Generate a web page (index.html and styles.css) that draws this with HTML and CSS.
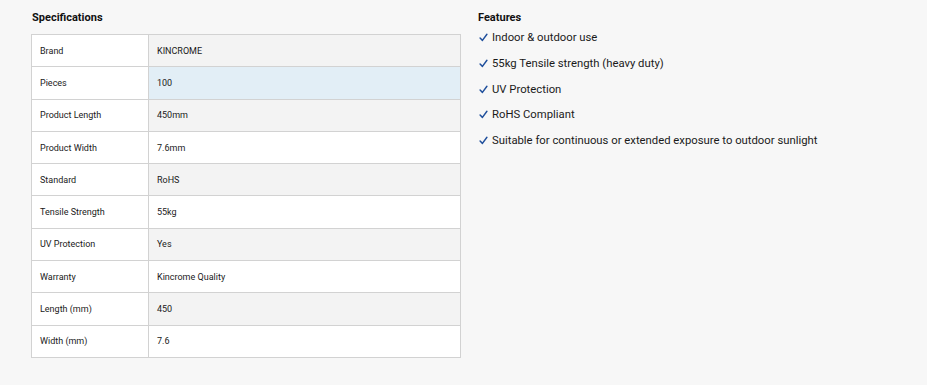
FILE: index.html
```html
<!DOCTYPE html>
<html lang="en">
<head>
<meta charset="utf-8">
<title>Specifications</title>
<link rel="stylesheet" href="styles.css">
</head>
<body>
<div class="page">
  <section class="specs">
    <h2 class="heading">Specifications</h2>
    <table class="spec-table">
      <tbody>
        <tr><td class="label">Brand</td><td class="value">KINCROME</td></tr>
        <tr class="hover"><td class="label">Pieces</td><td class="value">100</td></tr>
        <tr><td class="label">Product Length</td><td class="value">450mm</td></tr>
        <tr><td class="label">Product Width</td><td class="value">7.6mm</td></tr>
        <tr><td class="label">Standard</td><td class="value">RoHS</td></tr>
        <tr><td class="label">Tensile Strength</td><td class="value">55kg</td></tr>
        <tr><td class="label">UV Protection</td><td class="value">Yes</td></tr>
        <tr><td class="label">Warranty</td><td class="value">Kincrome Quality</td></tr>
        <tr><td class="label">Length (mm)</td><td class="value">450</td></tr>
        <tr><td class="label">Width (mm)</td><td class="value">7.6</td></tr>
      </tbody>
    </table>
  </section>
  <section class="features">
    <h2 class="heading">Features</h2>
    <ul class="feature-list">
      <li><svg class="tick" viewBox="0 0 10 10" aria-hidden="true"><path d="M1.2 5.6 L3.8 8.2 L8.8 1.4"/></svg>Indoor &amp; outdoor use</li>
      <li><svg class="tick" viewBox="0 0 10 10" aria-hidden="true"><path d="M1.2 5.6 L3.8 8.2 L8.8 1.4"/></svg>55kg Tensile strength (heavy duty)</li>
      <li><svg class="tick" viewBox="0 0 10 10" aria-hidden="true"><path d="M1.2 5.6 L3.8 8.2 L8.8 1.4"/></svg>UV Protection</li>
      <li><svg class="tick" viewBox="0 0 10 10" aria-hidden="true"><path d="M1.2 5.6 L3.8 8.2 L8.8 1.4"/></svg>RoHS Compliant</li>
      <li><svg class="tick" viewBox="0 0 10 10" aria-hidden="true"><path d="M1.2 5.6 L3.8 8.2 L8.8 1.4"/></svg>Suitable for continuous or extended exposure to outdoor sunlight</li>
    </ul>
  </section>
</div>
</body>
</html>
```
FILE: styles.css
```css
html, body {
  margin: 0;
  padding: 0;
  background: #f7f7f7;
  font-family: Roboto, "Liberation Sans", sans-serif;
  color: #1a1a1a;
}
.page {
  display: flex;
  gap: 17px;
  padding: 11px 0 0 31px;
}
.specs {
  width: 430px;
}
.heading {
  margin: 0;
  font-size: 11px;
  font-weight: 700;
  line-height: 14px;
  color: #111;
}
.specs .heading {
  margin: 0 0 9px 1px;
}
.spec-table {
  width: 430px;
  border-collapse: collapse;
  font-size: 9px;
  color: #1a1a1a;
}
.spec-table td {
  border: 1px solid #d2d2d2;
  height: 32.3px;
  padding: 0 8px;
  vertical-align: middle;
  box-sizing: border-box;
}
.label {
  width: 117px;
  background: #fff;
}
.value {
  background: #fff;
}
.spec-table tr:nth-child(odd) .value {
  background: #f3f3f3;
}
.spec-table tr.hover .value {
  background: #e2eef6;
}
.features .heading {
  margin-left: 0;
}
.feature-list {
  list-style: none;
  margin: 5px 0 0 0;
  padding: 0;
  font-size: 11.3px;
  color: #1a1a1a;
}
.feature-list li {
  line-height: 15px;
  margin-bottom: 10.8px;
  display: flex;
  align-items: center;
}
.tick {
  width: 9px;
  height: 9px;
  margin: 0 4px 0 1px;
  fill: none;
  stroke: #1f4f9c;
  stroke-width: 1.6;
  stroke-linecap: round;
  stroke-linejoin: round;
  flex: none;
}
```
